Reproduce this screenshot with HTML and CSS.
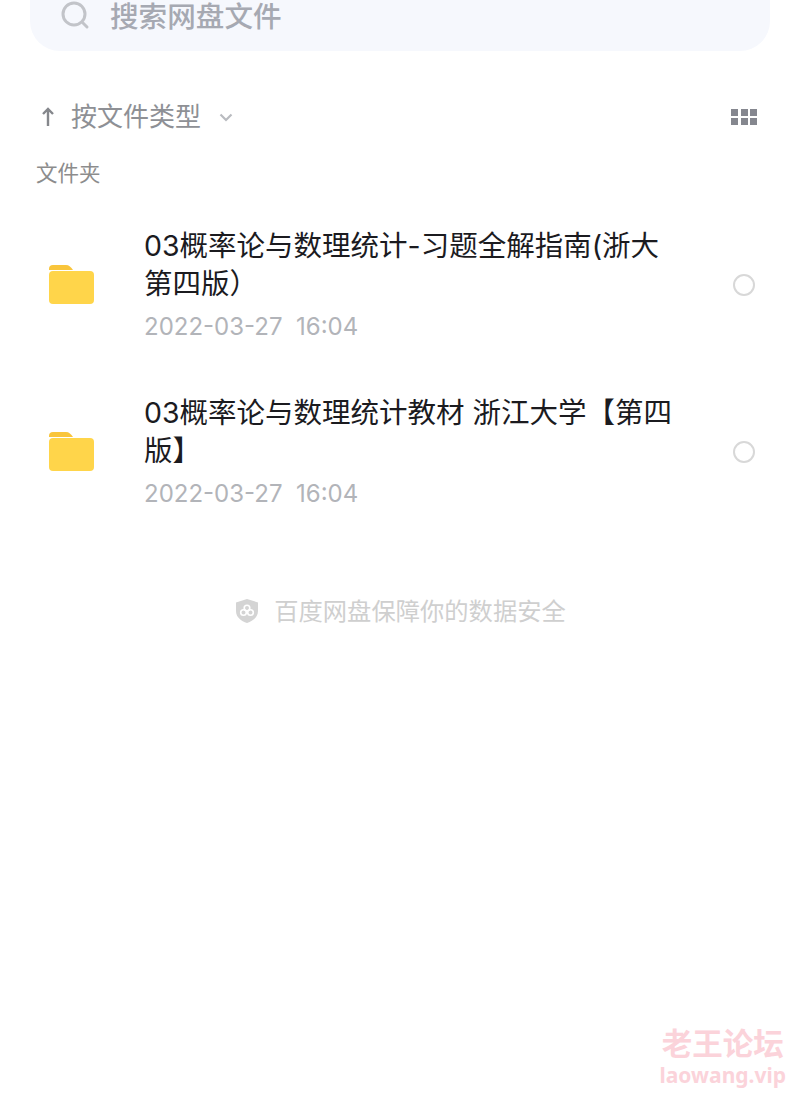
FILE: index.html
```html
<!DOCTYPE html>
<html lang="zh-CN">
<head>
  <meta charset="UTF-8">
  <title>百度网盘</title>
  <link rel="stylesheet" href="styles.css">
</head>
<body>

<div class="search">
  <svg class="search-icon" width="32" height="32" viewBox="0 0 32 32">
    <circle cx="14" cy="14" r="11" fill="none" stroke="#c2c4c9" stroke-width="3"/>
    <path d="M23 23l4 4" fill="none" stroke="#c2c4c9" stroke-width="3" stroke-linecap="round"/>
  </svg>
  <span class="search-text">搜索网盘文件</span>
</div>

<div class="sort-bar">
  <div class="sort">
    <svg width="14" height="20" viewBox="0 0 14 20">
      <path d="M7 19V2M2 7l5-5 5 5" fill="none" stroke="#85878c" stroke-width="2.4"/>
    </svg>
    <span class="sort-text">按文件类型</span>
    <svg width="14" height="9" viewBox="0 0 14 9">
      <path d="M1.5 1.5L7 7l5.5-5.5" fill="none" stroke="#b9bbc0" stroke-width="2.2"/>
    </svg>
  </div>
  <div class="grid-btn">
    <i></i><i></i><i></i><i></i><i></i><i></i>
  </div>
</div>

<div class="section-label">文件夹</div>

<div class="file-row">
  <svg class="folder" width="46" height="40" viewBox="0 0 46 40">
    <path d="M0 4a4 4 0 0 1 4-4h13c3 0 5 2 7 5H0z" fill="#f9c53b"/>
    <rect y="6" width="45" height="33" rx="4" fill="#ffd54a"/>
  </svg>
  <div class="file-info">
    <div class="file-name">03概率论与数理统计-习题全解指南(浙大第四版）</div>
    <div class="file-date">2022-03-27&nbsp;&nbsp;16:04</div>
  </div>
  <span class="radio"></span>
</div>

<div class="file-row">
  <svg class="folder" width="46" height="40" viewBox="0 0 46 40">
    <path d="M0 4a4 4 0 0 1 4-4h13c3 0 5 2 7 5H0z" fill="#f9c53b"/>
    <rect y="6" width="45" height="33" rx="4" fill="#ffd54a"/>
  </svg>
  <div class="file-info">
    <div class="file-name">03概率论与数理统计教材 浙江大学【第四版】</div>
    <div class="file-date">2022-03-27&nbsp;&nbsp;16:04</div>
  </div>
  <span class="radio"></span>
</div>

<div class="safe-note">
  <svg width="26" height="26" viewBox="0 0 26 26">
    <path d="M13 1l11 3.5V13c0 6-5 10-11 12C7 23 2 19 2 13V4.500z" fill="#d4d4d4"/>
    <circle cx="9.500" cy="14.500" r="2.800" fill="none" stroke="#fff" stroke-width="1.600"/>
    <circle cx="16.500" cy="14.500" r="2.800" fill="none" stroke="#fff" stroke-width="1.600"/>
    <circle cx="13" cy="10" r="2.800" fill="none" stroke="#fff" stroke-width="1.600"/>
  </svg>
  <span>百度网盘保障你的数据安全</span>
</div>

<div class="watermark">
  <div class="watermark-cn">老王论坛</div>
  <div class="watermark-en">laowang.vip</div>
</div>

</body>
</html>
```

FILE: styles.css
```css
body {
  margin: 0;
  height: 1093px;
  overflow: hidden;
  position: relative;
  background: #fff;
  font-family: Inter, "Noto Sans CJK SC", sans-serif;
}

.search {
  margin: 0 30px;
  height: 51px;
  display: flex;
  align-items: flex-start;
  background: #f6f8fd;
  border-radius: 0 0 30px 30px;
}
.search-icon {
  margin: 0 0 0 30px;
}
.search-text {
  margin-left: 18px;
  font-size: 28.600px;
  font-weight: 500;
  line-height: 34px;
  color: #a6a9b2;
}

.sort-bar {
  display: flex;
  justify-content: space-between;
  align-items: center;
  height: 40px;
  margin-top: 46px;
  padding: 0 43px 0 41px;
}
.sort {
  display: flex;
  align-items: center;
}
.sort-text {
  margin: 0 18px 0 16px;
  font-size: 26px;
  line-height: 36px;
  color: #8e9095;
}
.grid-btn {
  display: grid;
  grid-template-columns: repeat(3, 7px);
  gap: 2.500px;
}
.grid-btn i {
  height: 7px;
  background: #85878f;
}

.section-label {
  margin: 20px 0 12px 36px;
  font-size: 21.500px;
  line-height: 32px;
  color: #8c8c8c;
}

.file-row {
  display: flex;
  align-items: center;
  height: 167px;
  padding: 0 45px 0 49px;
}
.folder {
  flex-shrink: 0;
}
.file-info {
  width: 530px;
  margin-left: 49px;
}
.file-name {
  font-size: 28.500px;
  line-height: 38px;
  color: #1b1b1f;
}
.file-date {
  margin-top: 8px;
  font-size: 24px;
  line-height: 32px;
  color: #b2b4b9;
}
.radio {
  width: 18px;
  height: 18px;
  margin-left: auto;
  border: 2px solid #d8d8d8;
  border-radius: 50%;
}

.safe-note {
  display: flex;
  justify-content: center;
  align-items: center;
  gap: 14px;
  margin-top: 58px;
  font-size: 24.300px;
  line-height: 36px;
  color: #cfcfcf;
}

.watermark {
  position: absolute;
  right: 14px;
  bottom: 5px;
  font-weight: 700;
  color: #fbd3da;
  text-align: center;
}
.watermark-cn {
  font-size: 30.500px;
  line-height: 36px;
}
.watermark-en {
  font-size: 21px;
  line-height: 26px;
  font-family: "Noto Sans", sans-serif;
}
```
